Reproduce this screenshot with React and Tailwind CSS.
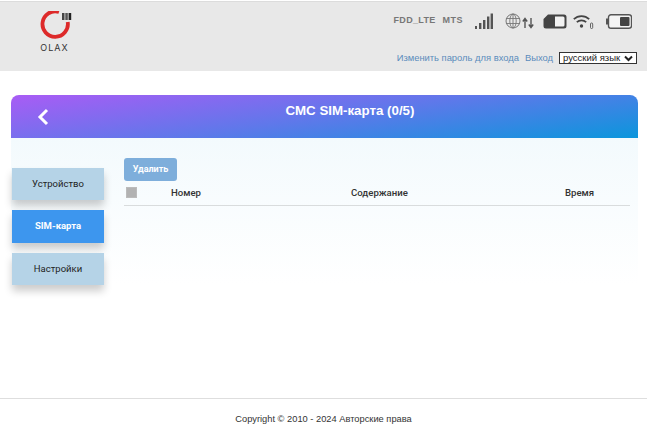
const Logo = () => (
    <div className="flex flex-col items-center w-[36px]">
        <svg width="36" height="30" viewBox="0 0 36 30">
            <path d="M21 1 A12.7 12.7 0 1 0 29.7 11" fill="none" stroke="#dd2a2a" strokeWidth="3.8" />
            <rect x="24" y="2" width="2.5" height="7" fill="#444" />
            <rect x="27.3" y="2" width="2.5" height="7" fill="#555" />
            <rect x="30.6" y="2" width="2.6" height="7" fill="#222" />
        </svg>
        <span className="text-[9px] leading-[10px] mt-[2px] ml-[-3px] tracking-[1px] text-[#333] font-['Inter',sans-serif]">OLAX</span>
    </div>
);

const SignalIcon = () => (
    <svg width="18" height="17" viewBox="0 0 18 17" fill="#555">
        <rect x="0" y="13" width="2" height="3" />
        <rect x="4" y="10" width="2.4" height="6" />
        <rect x="8" y="7" width="2.4" height="9" />
        <rect x="12" y="3.5" width="2.4" height="12.5" />
        <rect x="15.6" y="0.5" width="2.4" height="15.5" />
    </svg>
);

const NetworkIcon = () => (
    <svg width="30" height="17" viewBox="0 0 30 17" fill="none" stroke="#777">
        <circle cx="8" cy="8" r="7" strokeWidth="1" />
        <ellipse cx="8" cy="8" rx="3.2" ry="7" strokeWidth="0.9" />
        <path d="M1 5.5h14M1 10.5h14M8 1v14" strokeWidth="0.9" />
        <path d="M20 15V6M17.8 8.5L20 5.5l2.2 3M26 5v9M23.8 11.5L26 14.5l2.2-3" strokeWidth="1.4" stroke="#555" />
    </svg>
);

const SimIcon = () => (
    <svg width="24" height="15" viewBox="0 0 24 15">
        <path d="M5 0.5H21a2.5 2.5 0 0 1 2.5 2.5V12a2.5 2.5 0 0 1-2.5 2.5H3A2.5 2.5 0 0 1 .5 12V5Z" fill="#444" />
        <path d="M12 2.5H20a1.5 1.5 0 0 1 1.5 1.5V11a1.5 1.5 0 0 1-1.5 1.5H12Z" fill="#f2f2f2" />
    </svg>
);

const WifiIcon = () => (
    <svg width="21" height="17" viewBox="0 0 21 17" fill="none" stroke="#444" strokeWidth="1.7">
        <path d="M0.8 6.2a11 11 0 0 1 15.4 0" />
        <path d="M3.8 9.2a6.8 6.8 0 0 1 9.4 0" />
        <circle cx="8.5" cy="13" r="1.7" fill="#444" stroke="none" />
        <rect x="17.5" y="10" width="2.2" height="5.5" rx="1" strokeWidth="0.9" stroke="#555" />
    </svg>
);

const BatteryIcon = () => (
    <svg width="26" height="15" viewBox="0 0 26 15">
        <rect x="0" y="4.5" width="2" height="6" fill="#555" />
        <rect x="2.5" y="0.7" width="23" height="13.6" rx="2.5" fill="#f4f4f4" stroke="#555" strokeWidth="1.4" />
        <rect x="14" y="3" width="9.5" height="9" rx="1" fill="#444" />
    </svg>
);

const SideButton = ({ label, active }) => (
    <button
        className={`w-[92px] h-[33px] text-[9.5px] font-['Roboto',sans-serif] shadow-[0_6px_8px_rgba(0,0,0,0.2)] ${active ? "bg-[#3d96ee] text-white font-bold" : "bg-[#b5d3e7] text-[#222]"}`}
    >
        {label}
    </button>
);

const App = () => {
    return (
        <div className="w-[658px] h-[445px] bg-white overflow-hidden font-['Liberation_Sans',Arial,sans-serif]">
            {/* Header */}
            <div className="w-[647px] h-[70px] mt-[1px] bg-[#e8e8e8] border-t border-[#dcdcdc] flex justify-between relative">
                <div className="pl-[38px] pt-[9px]">
                    <Logo />
                </div>
                <div className="flex flex-col items-end pr-[10px] pt-[10px]">
                    <div className="flex items-center h-[18px]">
                        <span className="text-[9px] font-bold tracking-[0.3px] text-[#777] mr-[7px]">FDD_LTE</span>
                        <span className="text-[9px] font-bold tracking-[0.5px] text-[#777] mr-[12px]">MTS</span>
                        <div className="mr-[12px]"><SignalIcon /></div>
                        <div className="mr-[8px]"><NetworkIcon /></div>
                        <div className="mr-[6px]"><SimIcon /></div>
                        <div className="mr-[12px]"><WifiIcon /></div>
                        <div className="mr-[5px]"><BatteryIcon /></div>
                    </div>
                    <div className="flex items-center mt-[21px] text-[9.4px] text-[#5b8cbc]">
                        <span className="mr-[6px]">Изменить пароль для входа</span>
                        <span className="mr-[6px]">Выход</span>
                        <div className="w-[78px] h-[12px] bg-white border border-[#333] text-[#222] text-[9.5px] leading-[10px] pl-[3px] flex items-center justify-between pr-[3px]">
                            русский язык
                            <svg width="9" height="7" viewBox="0 0 9 7" fill="none" stroke="#222" strokeWidth="2">
                                <path d="M1 1.5l3.5 3.5L8 1.5" />
                            </svg>
                        </div>
                    </div>
                </div>
            </div>

            {/* Card */}
            <div className="ml-[11px] mt-[24px] w-[627px]">
                <div className="h-[43px] rounded-t-[8px] bg-[linear-gradient(172deg,#a95cf5_0%,#5f78ea_50%,#0b96dc_100%)] flex relative">
                    <svg className="absolute left-[26px] top-[13px]" width="12" height="18" viewBox="0 0 12 18" fill="none" stroke="white" strokeWidth="3">
                        <path d="M10 2L3 9l7 7" />
                    </svg>
                    <p className="w-full text-center text-white font-bold text-[13.3px] leading-[16px] pt-[8px] pl-[51px]">СМС SIM-карта (0/5)</p>
                </div>
                <div className="h-[147px] bg-[linear-gradient(to_bottom,#f3fafd,#ffffff)] flex">
                    <div className="flex flex-col gap-[10px] pl-[1px] pt-[30px]">
                        <SideButton label="Устройство" />
                        <SideButton label="SIM-карта" active />
                        <SideButton label="Настройки" />
                    </div>
                    <div className="w-[506px] ml-[20px] pt-[20px] font-['Roboto',sans-serif]">
                        <button className="w-[53px] h-[23px] block rounded-[3px] bg-[#7eaedb] text-white text-[9px] font-bold">Удалить</button>
                        <div className="h-[25px] flex items-center border-b border-[#d9dcdd] text-[9.6px] font-medium text-[#333]">
                            <span className="w-[11px] h-[11px] ml-[2px] mb-[1px] bg-[#b2b2b2] border border-[#bbb]"></span>
                            <span className="ml-[34px] w-[180px]">Номер</span>
                            <span className="w-[214px]">Содержание</span>
                            <span>Время</span>
                        </div>
                    </div>
                </div>
            </div>

            {/* Footer */}
            <div className="w-[647px] mt-[113px] border-t border-[#dedede] pt-[14px] text-center text-[9.3px] text-[#333]">
                Copyright © 2010 - 2024 Авторские права
            </div>
        </div>
    );
};

export default App;
